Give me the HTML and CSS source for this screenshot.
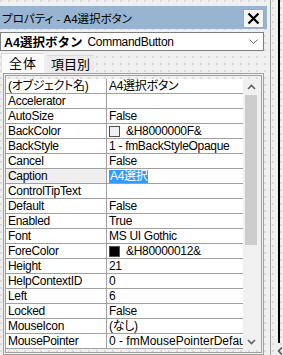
FILE: index.html
```html
<!DOCTYPE html>
<html>
	<head>
		<meta charset="utf-8" />
		<link rel="stylesheet" href="styles.css">
	</head>
	<body>
		<div class="pane">
			<div class="titlebar">
				<span class="title">プロパティ - A4選択ボタン</span>
				<div class="close">
					<svg width="13" height="13" viewBox="0 0 13 13"><path d="M1.5 1.5 L11.5 11.5 M11.5 1.5 L1.5 11.5" stroke="#000" stroke-width="2.2" /></svg>
				</div>
			</div>
			<div class="objsel">
				<b>A4選択ボタン</b><span>CommandButton</span>
				<svg class="chev" width="9" height="6" viewBox="0 0 9 6"><path d="M0.5 0.5 L4.5 4.5 L8.5 0.5" fill="none" stroke="#6d6d6d" stroke-width="1" /></svg>
			</div>
			<div class="tabs">
				<span class="tab active">全体</span>
				<span class="tab">項目別</span>
			</div>
			<div class="frame">
				<div class="grid">
					<div class="row"><span class="name">(オブジェクト名)</span><span class="val">A4選択ボタン</span></div>
					<div class="row"><span class="name">Accelerator</span><span class="val"></span></div>
					<div class="row"><span class="name">AutoSize</span><span class="val">False</span></div>
					<div class="row"><span class="name">BackColor</span><span class="val"><i class="swatch"></i>&amp;H8000000F&amp;</span></div>
					<div class="row"><span class="name">BackStyle</span><span class="val">1 - fmBackStyleOpaque</span></div>
					<div class="row"><span class="name">Cancel</span><span class="val">False</span></div>
					<div class="row current"><span class="name">Caption</span><span class="val"><em class="sel">A4選択</em></span></div>
					<div class="row"><span class="name">ControlTipText</span><span class="val"></span></div>
					<div class="row"><span class="name">Default</span><span class="val">False</span></div>
					<div class="row"><span class="name">Enabled</span><span class="val">True</span></div>
					<div class="row"><span class="name">Font</span><span class="val">MS UI Gothic</span></div>
					<div class="row"><span class="name">ForeColor</span><span class="val"><i class="swatch black"></i>&amp;H80000012&amp;</span></div>
					<div class="row"><span class="name">Height</span><span class="val">21</span></div>
					<div class="row"><span class="name">HelpContextID</span><span class="val">0</span></div>
					<div class="row"><span class="name">Left</span><span class="val">6</span></div>
					<div class="row"><span class="name">Locked</span><span class="val">False</span></div>
					<div class="row"><span class="name">MouseIcon</span><span class="val">(なし)</span></div>
					<div class="row"><span class="name">MousePointer</span><span class="val wide">0 - fmMousePointerDefault</span></div>
				</div>
				<div class="scroll">
					<div class="arrow">
						<svg width="9" height="6" viewBox="0 0 9 6"><path d="M1 5 L4.5 1.5 L8 5" fill="none" stroke="#606060" stroke-width="1.6" /></svg>
					</div>
					<div class="thumb"></div>
					<div class="track"></div>
					<div class="arrow">
						<svg width="9" height="6" viewBox="0 0 9 6"><path d="M1 1 L4.5 4.5 L8 1" fill="none" stroke="#606060" stroke-width="1.6" /></svg>
					</div>
				</div>
			</div>
		</div>
		<div class="side">
			<div class="edge"></div>
			<svg class="back" width="6" height="8" viewBox="0 0 6 8"><path d="M5 0.5 L1.5 4 L5 7.5" fill="none" stroke="#505050" stroke-width="1.5" /></svg>
		</div>
	</body>
</html>
```

FILE: styles.css
```css
html,
body {
	margin: 0;
}
body {
	width: 283px;
	height: 355px;
	overflow: hidden;
	display: flex;
	background-color: #f0f0f0;
	background-image: radial-gradient(circle at 1px 1px, #dadada 0.8px, transparent 1px);
	background-size: 8px 7px;
	font-family: "Liberation Sans", "Noto Sans CJK JP", sans-serif;
	font-size: 12px;
	font-feature-settings: "palt";
	color: #000;
}
.pane {
	width: 272px;
	box-sizing: border-box;
	border-right: 1px solid #a0a0a0;
	padding-top: 6px;
	display: flex;
	flex-direction: column;
}
.titlebar {
	height: 23px;
	margin-right: 3px;
	padding-left: 2px;
	background: #99b4d1;
	display: flex;
	align-items: center;
	justify-content: space-between;
}
.title {
	font-size: 11.5px;
}
.close {
	width: 21px;
	height: 19px;
	box-sizing: border-box;
	margin-right: 3px;
	margin-top: 2px;
	border: 1px solid #a8a8a8;
	background: #f4f4f4;
	display: flex;
	align-items: center;
	justify-content: center;
}
.objsel {
	margin-top: 3px;
	width: 264px;
	height: 19px;
	box-sizing: border-box;
	border: 1px solid #7f7f7f;
	background: #fff;
	display: flex;
	align-items: center;
	padding-left: 3px;
	letter-spacing: -0.3px;
}
.objsel b {
	font-size: 12.5px;
	margin-right: 5px;
	letter-spacing: 0;
	font-feature-settings: normal;
}
.chev {
	margin-left: auto;
	margin-right: 5px;
}
.tabs {
	margin-top: 2px;
	height: 20px;
	display: flex;
	align-items: flex-end;
	padding-left: 1px;
}
.tab {
	font-size: 13px;
	height: 17px;
	line-height: 17px;
	padding: 0 4px;
	margin-left: 3px;
	background: #ececec;
	border-top: 1px solid #d8d8d8;
}
.tab.active {
	height: 20px;
	line-height: 19px;
	width: 43px;
	box-sizing: border-box;
	padding: 0 7px;
	margin-left: 0;
	background: #fbfbfb;
	border-left: 1px solid #e0e0e0;
	letter-spacing: 1px;
}
.frame {
	margin-left: 3px;
	width: 261px;
	flex: 1;
	box-sizing: border-box;
	border: 3px double #a0a0a0;
	padding: 3px 3px 0 0;
	display: flex;
	align-items: flex-start;
}
.grid {
	width: 237px;
	background: #fff;
}
.row {
	height: 15px;
	box-sizing: border-box;
	border-bottom: 1px solid #a0a0a0;
	display: flex;
	align-items: center;
	white-space: nowrap;
	letter-spacing: -0.3px;
}
.name {
	width: 101px;
	height: 14px;
	line-height: 14px;
	box-sizing: border-box;
	padding-left: 2px;
	border-right: 1px solid #a0a0a0;
	overflow: hidden;
}
.current .name {
	background: #efefef;
}
.val {
	flex: 1;
	min-width: 0;
	height: 14px;
	line-height: 14px;
	padding-left: 2px;
	overflow: hidden;
	display: flex;
	align-items: center;
}
.val.wide {
	letter-spacing: 0;
}
.sel {
	font-style: normal;
	background: #3399ff;
	color: #fff;
	padding: 0 1px;
	line-height: 13px;
}
.swatch {
	flex: none;
	width: 9px;
	height: 9px;
	border: 1px solid #505050;
	background: #f0f0f0;
	margin-right: 6px;
}
.swatch.black {
	background: #000;
}
.scroll {
	width: 15px;
	height: 270px;
	margin-left: 1px;
	background: #f0f0f0;
	display: flex;
	flex-direction: column;
}
.arrow {
	height: 15px;
	display: flex;
	align-items: center;
	justify-content: center;
}
.thumb {
	height: 150px;
	margin: 1px 1px 0;
	background: #cdcdcd;
}
.track {
	flex: 1;
}
.side {
	flex: 1;
	display: flex;
	flex-direction: column;
	align-items: flex-start;
}
.edge {
	width: 2px;
	height: 343px;
	margin-left: 7px;
	background: #000;
}
.back {
	margin-top: 4px;
	margin-left: 6px;
}
```
